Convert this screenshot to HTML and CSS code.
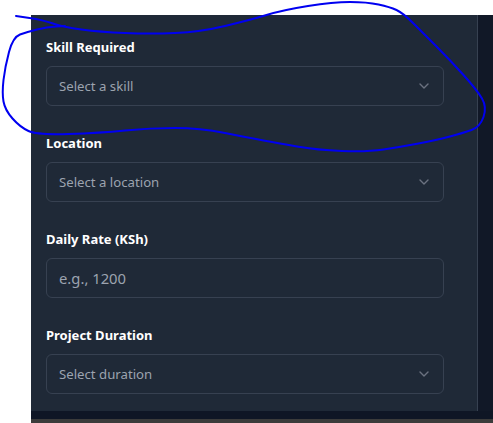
FILE: index.html
```html
<!DOCTYPE html>
<html lang="en">
<head>
<meta charset="utf-8">
<title>Job form</title>
<link rel="stylesheet" href="styles.css">
</head>
<body>
<div class="page">
  <div class="row">
    <form class="panel">
      <div class="field">
        <label class="label">Skill Required</label>
        <div class="select">
          <span class="placeholder">Select a skill</span>
          <svg class="chevron" width="10" height="6" viewBox="0 0 10 6"><path d="M1 1l4 4 4-4" fill="none" stroke="currentColor" stroke-width="1.4" stroke-linecap="round" stroke-linejoin="round"/></svg>
        </div>
      </div>
      <div class="field">
        <label class="label">Location</label>
        <div class="select">
          <span class="placeholder">Select a location</span>
          <svg class="chevron" width="10" height="6" viewBox="0 0 10 6"><path d="M1 1l4 4 4-4" fill="none" stroke="currentColor" stroke-width="1.4" stroke-linecap="round" stroke-linejoin="round"/></svg>
        </div>
      </div>
      <div class="field">
        <label class="label">Daily Rate (KSh)</label>
        <div class="select">
          <span class="placeholder placeholder-input">e.g., 1200</span>
        </div>
      </div>
      <div class="field">
        <label class="label">Project Duration</label>
        <div class="select">
          <span class="placeholder">Select duration</span>
          <svg class="chevron" width="10" height="6" viewBox="0 0 10 6"><path d="M1 1l4 4 4-4" fill="none" stroke="currentColor" stroke-width="1.4" stroke-linecap="round" stroke-linejoin="round"/></svg>
        </div>
      </div>
    </form>
    <div class="side"></div>
  </div>
  <div class="strip"></div>
  <div class="grey"></div>
</div>
<svg class="annotation" width="493" height="423" viewBox="0 0 493 423">
  <path d="M16 16 L29.5 18 Q43 20 53 23.5 Q63 27 81.5 29.5 Q100 32 125 33 Q150 34 175 33 Q200 32 225 26 Q250 20 266.5 15 Q283 10 308 6 Q333 2 350 2 Q367 2 378.5 4.5 Q390 7 396.5 10 Q403 13 413 23 Q423 33 436.5 46.5 Q450 60 463.5 75 Q477 90 482 98.5 Q487 107 483.5 117 Q480 127 471.5 130 Q463 133 450 136.5 Q437 140 418.5 143.5 Q400 147 383.5 149.5 Q367 152 342 151 Q317 150 297 146.5 Q277 143 263.5 140.5 Q250 138 225 133 Q200 128 175 128 Q150 128 125 130.5 Q100 133 68.5 134 Q37 135 28.5 131 Q20 127 12.5 118.5 Q5 110 3.5 101.5 Q2 93 3.5 80 Q5 67 9 52 Q13 37 20 34.5 Q27 32 37 29.5 Q47 27 56 26.5 L65 26" fill="none" stroke="#0000f0" stroke-width="2" stroke-linecap="round" stroke-linejoin="round"/>
</svg>
</body>
</html>
```
FILE: styles.css
```css
html, body {
  margin: 0;
  padding: 0;
  background: #ffffff;
  font-family: "Noto Sans", "Open Sans", sans-serif;
}

.page {
  margin-left: 31px;
  padding-top: 15px;
}

.row {
  display: flex;
}

.panel {
  box-sizing: border-box;
  flex: 0 0 447px;
  margin: 0;
  padding: 22px 33px 17px 15px;
  background: #1f2937;
  border-right: 1px solid #374151;
  display: flex;
  flex-direction: column;
  gap: 27px;
}

.side {
  flex: 1;
  background: #111827;
}

.strip {
  height: 8px;
  background: #0f1625;
}

.grey {
  height: 4px;
  background: #3b3b3b;
}

.field {
  display: flex;
  flex-direction: column;
  gap: 9px;
}

.label {
  display: block;
  height: 20px;
  line-height: 20px;
  font-size: 13px;
  font-weight: 700;
  color: #ffffff;
}

.select {
  height: 40px;
  box-sizing: border-box;
  border: 1px solid #374151;
  border-radius: 6px;
  background: #1f2937;
  padding: 0 14px 0 12px;
  display: flex;
  align-items: center;
  justify-content: space-between;
}

.placeholder {
  font-size: 13.2px;
  color: #9ca3af;
}

.placeholder-input {
  font-size: 14.8px;
}

.chevron {
  color: #6b7280;
  display: block;
}

.annotation {
  position: absolute;
  left: 0;
  top: 0;
  pointer-events: none;
}
```
